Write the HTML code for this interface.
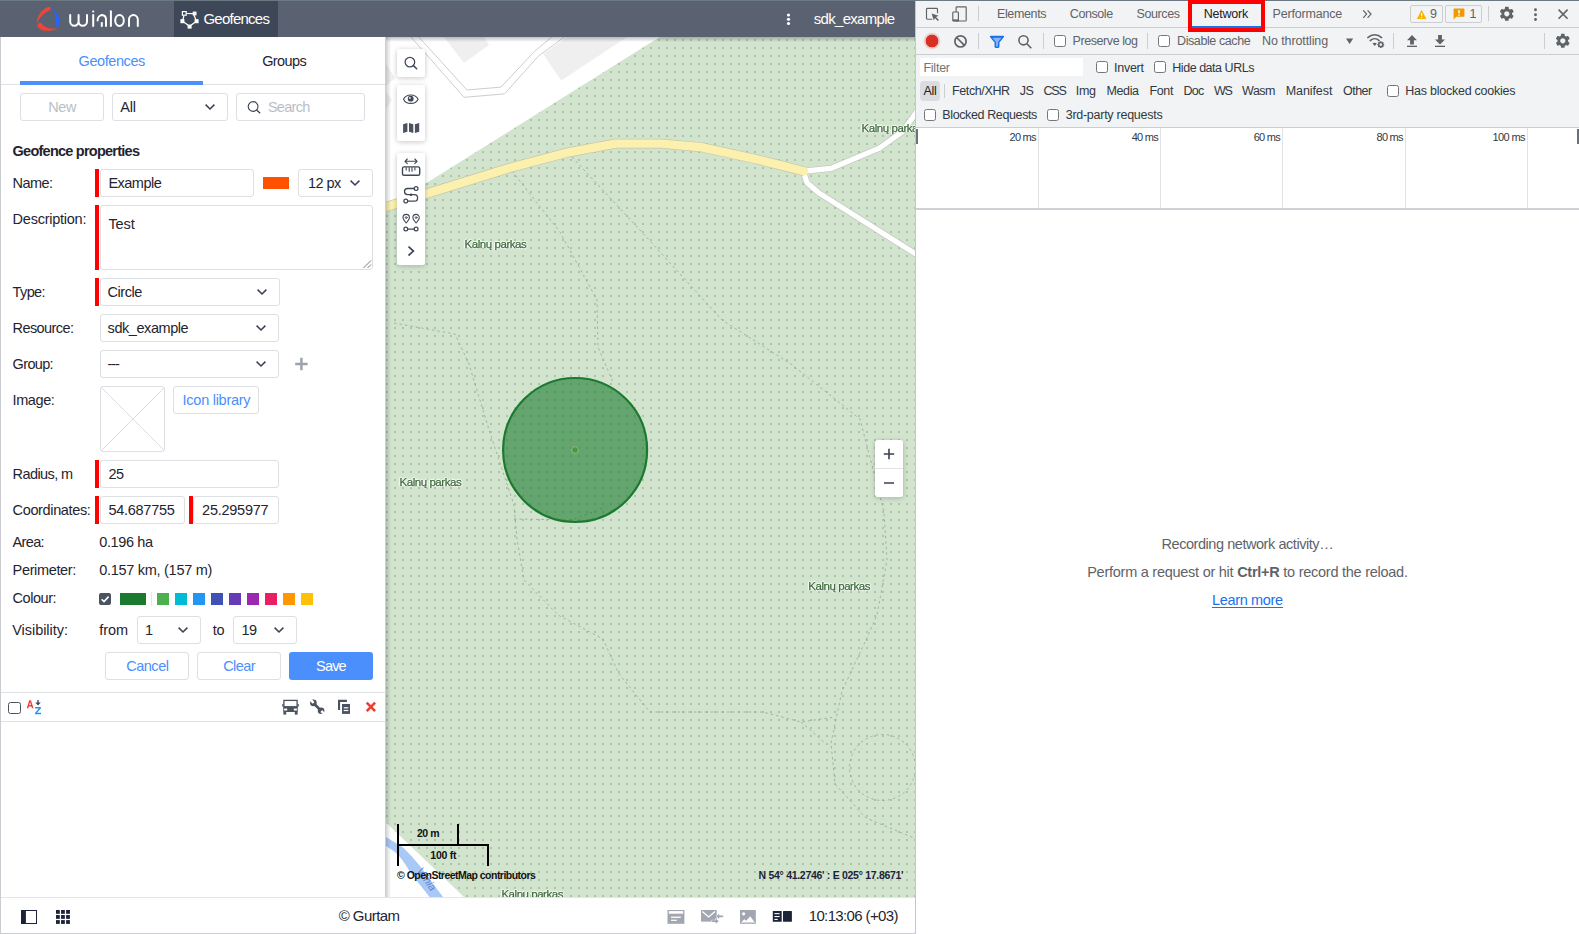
<!DOCTYPE html>
<html>
<head>
<meta charset="utf-8">
<title>Wialon</title>
<style>
*{box-sizing:border-box;margin:0;padding:0}
html,body{width:1579px;height:934px;overflow:hidden;background:#fff}
body{font-family:"Liberation Sans",sans-serif;font-size:14px;color:#1f2430;position:relative}
.abs{position:absolute}
.t{position:absolute;white-space:pre;line-height:1}
.box{position:absolute;border:1px solid #dcdfe3;border-radius:3px;background:#fff}
.red{position:absolute;width:4px;background:#ff0000}
.ln{position:absolute;background:#dfe1e4}
.sw{position:absolute;top:593px;width:12px;height:12px}
.cb{position:absolute;width:12px;height:12px;border:1px solid #767676;border-radius:2.5px;background:#fff}
.dvl{position:absolute;background:#cbcdd1}
</style>
</head>
<body>
<!-- ===== Wialon header ===== -->
<div class="abs" style="left:0;top:0;width:915px;height:37px;background:#5a6170"></div>
<div class="abs" style="left:0;top:0;width:1579px;height:1px;background:#6a7982"></div>
<div class="abs" style="left:174px;top:1px;width:104px;height:36px;background:#3e4757"></div>
<svg class="abs" style="left:30px;top:0" width="120" height="38" viewBox="0 0 120 38">
  <path d="M6.7 23.4 C6.9 16 11.8 9.3 18 7 A1.75 1.75 0 0 1 19.7 10.3 C14.2 12.6 9.8 17.4 6.7 23.4Z" fill="#f44336"/>
  <path d="M20.2 7.1 C25.8 10.2 30 16.8 30.2 23.6 A2.3 2.3 0 0 1 25.6 24.2 C27.2 18 24.8 11.6 20.2 7.1Z" fill="#2962ff"/>
  <path d="M7.9 27.2 C11.6 31.6 21 32.2 28.3 28 C22 29.8 15.8 28.4 11.6 23.8 A2.4 2.4 0 0 0 7.9 27.2Z" fill="#f44336"/>
  <g fill="none" stroke="#fff" stroke-width="2" stroke-linecap="round" stroke-linejoin="round">
    <path d="M40.2 15 V21.6 A4.2 4.2 0 0 0 48.6 21.6 V15 M48.6 21.6 A4.2 4.2 0 0 0 57 21.6 V15"/>
    <path d="M63.2 15 V26"/>
    <path d="M67.6 20.4 A5 5.4 0 0 1 72.4 15 A4.4 4.6 0 0 1 76 19.6 V26"/>
    <path d="M71.8 22.2 V26.8" stroke-linecap="butt"/>
    <path d="M80.9 11.2 V26"/>
    <path d="M85.2 20.5 a4.3 5.4 0 1 0 8.6 0 a4.3 5.4 0 1 0 -8.6 0"/>
    <path d="M99 26 V19.6 A4.4 4.6 0 0 1 107.8 19.6 V26"/>
  </g>
  <circle cx="63.2" cy="11.5" r="1.1" fill="#fff"/>
</svg>
<svg class="abs" style="left:178px;top:8px" width="24" height="24" viewBox="0 0 24 24" fill="none" stroke="#fff" stroke-width="1.2">
  <path d="M8.2 5.5 L15.5 5.7 L18.4 13.3 L11.6 18.3 L4.6 13.3 L5.9 7.5"/>
  <rect x="4.4" y="3.6" width="3.8" height="3.6" fill="#3e4757"/>
  <rect x="15.3" y="4.2" width="2.6" height="2.6" fill="#fff"/>
  <rect x="17.2" y="11.8" width="2.8" height="2.8" fill="#fff"/>
  <rect x="10.2" y="17.2" width="2.8" height="2.8" fill="#fff"/>
  <rect x="3.0" y="11.8" width="2.8" height="2.8" fill="#fff"/>
</svg>
<div class="t" style="left:203.40px;top:10px;line-height:17px;font-size:15px;color:#fff;letter-spacing:-0.750px">Geofences</div>
<svg class="abs" style="left:785px;top:11px" width="8" height="16" viewBox="0 0 8 16" fill="#fff"><circle cx="3.5" cy="4" r="1.6"/><circle cx="3.5" cy="8.25" r="1.6"/><circle cx="3.5" cy="12.5" r="1.6"/></svg>
<div class="t" style="left:813.80px;top:10px;line-height:17px;font-size:15px;color:#fff;letter-spacing:-0.708px">sdk_example</div>
<!-- ===== Left panel ===== -->
<div class="abs" style="left:0;top:37px;width:1px;height:897px;background:#c9cdd2"></div>
<!-- tabs -->
<div class="t" style="left:78.60px;top:53px;line-height:16px;font-size:14.5px;color:#4a8ffc;letter-spacing:-0.427px">Geofences</div>
<div class="t" style="left:262.20px;top:53px;line-height:16px;font-size:14.5px;color:#1f2430;letter-spacing:-0.610px">Groups</div>
<div class="ln" style="left:1px;top:84px;width:384px;height:1px"></div>
<div class="abs" style="left:20px;top:81px;width:183px;height:4px;background:#4a8ffc"></div>
<!-- toolbar -->
<div class="box" style="left:20px;top:93px;width:84px;height:28px"></div>
<div class="t" style="left:48.20px;top:99px;line-height:16px;font-size:14.5px;color:#b9bec6;letter-spacing:-0.405px">New</div>
<div class="box" style="left:112px;top:93px;width:116px;height:28px"></div>
<div class="t" style="left:120.20px;top:99px;line-height:16px;font-size:14.5px;color:#1f2430;letter-spacing:-0.108px">All</div>
<svg class="abs" style="left:204px;top:103px" width="12" height="8" viewBox="0 0 12 8" fill="none" stroke="#3a4252" stroke-width="1.5"><path d="M1.6 1.6 L6 6 L10.4 1.6"/></svg>
<div class="box" style="left:236px;top:93px;width:129px;height:28px"></div>
<svg class="abs" style="left:246px;top:99px" width="16" height="16" viewBox="0 0 16 16" fill="none" stroke="#3a4252" stroke-width="1.1"><circle cx="7.1" cy="7.5" r="4.9"/><path d="M10.6 11 L14.2 14.3" stroke-width="1.3"/></svg>
<div class="t" style="left:267.90px;top:99px;line-height:16px;font-size:14.5px;color:#b9bec6;letter-spacing:-0.692px">Search</div>
<!-- properties -->
<div class="t" style="left:12.60px;top:143px;line-height:16px;font-size:14.5px;color:#1f2430;font-weight:700;letter-spacing:-0.759px">Geofence properties</div>
<div class="t" style="left:12.60px;top:175px;line-height:16px;font-size:14.5px;color:#1f2430;letter-spacing:-0.564px">Name:</div>
<div class="red" style="left:95px;top:169px;height:28px"></div>
<div class="box" style="left:100px;top:169px;width:154px;height:28px"></div>
<div class="t" style="left:108.40px;top:175px;line-height:16px;font-size:14.5px;color:#1f2430;letter-spacing:-0.517px">Example</div>
<div class="abs" style="left:263px;top:177px;width:26px;height:12px;background:#ff5100"></div>
<div class="box" style="left:298px;top:169px;width:75px;height:28px"></div>
<div class="t" style="left:307.90px;top:175px;line-height:16px;font-size:14.5px;color:#1f2430;letter-spacing:-0.557px">12 px</div>
<svg class="abs" style="left:349px;top:179px" width="12" height="8" viewBox="0 0 12 8" fill="none" stroke="#3a4252" stroke-width="1.5"><path d="M1.6 1.6 L6 6 L10.4 1.6"/></svg>
<div class="t" style="left:12.60px;top:211px;line-height:16px;font-size:14.5px;color:#1f2430;letter-spacing:-0.247px">Description:</div>
<div class="red" style="left:95px;top:205px;height:65px"></div>
<div class="box" style="left:100px;top:205px;width:273px;height:65px"></div>
<div class="t" style="left:108.40px;top:216px;line-height:16px;font-size:14.5px;color:#1f2430;letter-spacing:-0.073px">Test</div>
<svg class="abs" style="left:362px;top:259px" width="10" height="10" viewBox="0 0 10 10" stroke="#555" stroke-width="0.8" fill="none"><path d="M1.5 9 L9 1.5 M5.5 9 L9 5.5"/></svg>
<div class="t" style="left:12.60px;top:284px;line-height:16px;font-size:14.5px;color:#1f2430;letter-spacing:-0.614px">Type:</div>
<div class="red" style="left:95px;top:278px;height:28px"></div>
<div class="box" style="left:100px;top:278px;width:180px;height:28px"></div>
<div class="t" style="left:107.60px;top:284px;line-height:16px;font-size:14.5px;color:#1f2430;letter-spacing:-0.460px">Circle</div>
<svg class="abs" style="left:256px;top:288px" width="12" height="8" viewBox="0 0 12 8" fill="none" stroke="#3a4252" stroke-width="1.5"><path d="M1.6 1.6 L6 6 L10.4 1.6"/></svg>
<div class="t" style="left:12.60px;top:320px;line-height:16px;font-size:14.5px;color:#1f2430;letter-spacing:-0.588px">Resource:</div>
<div class="box" style="left:100px;top:314px;width:179px;height:28px"></div>
<div class="t" style="left:107.60px;top:320px;line-height:16px;font-size:14.5px;color:#1f2430;letter-spacing:-0.440px">sdk_example</div>
<svg class="abs" style="left:255px;top:324px" width="12" height="8" viewBox="0 0 12 8" fill="none" stroke="#3a4252" stroke-width="1.5"><path d="M1.6 1.6 L6 6 L10.4 1.6"/></svg>
<div class="t" style="left:12.60px;top:356px;line-height:16px;font-size:14.5px;color:#1f2430;letter-spacing:-0.657px">Group:</div>
<div class="box" style="left:100px;top:350px;width:179px;height:28px"></div>
<div class="t" style="left:107.60px;top:356px;line-height:16px;font-size:14.5px;color:#1f2430;letter-spacing:-1.167px">---</div>
<svg class="abs" style="left:255px;top:360px" width="12" height="8" viewBox="0 0 12 8" fill="none" stroke="#3a4252" stroke-width="1.5"><path d="M1.6 1.6 L6 6 L10.4 1.6"/></svg>
<svg class="abs" style="left:294px;top:357px" width="14" height="14" viewBox="0 0 14 14" stroke="#9ca2ab" stroke-width="2.4" fill="none"><path d="M7.4 0.8 V13.2 M1.2 7 H13.6"/></svg>
<div class="t" style="left:12.60px;top:392px;line-height:16px;font-size:14.5px;color:#1f2430;letter-spacing:-0.424px">Image:</div>
<div class="box" style="left:100px;top:386px;width:65px;height:66px"></div>
<svg class="abs" style="left:101px;top:387px" width="63" height="64" viewBox="0 0 63 64" preserveAspectRatio="none" stroke="#d4d6d9" stroke-width="0.8"><path d="M0 0 L64 64 M64 0 L0 64"/></svg>
<div class="box" style="left:173px;top:386px;width:86px;height:28px"></div>
<div class="t" style="left:182.60px;top:392px;line-height:16px;font-size:14.5px;color:#4a8ffc;letter-spacing:-0.268px">Icon library</div>
<div class="t" style="left:12.60px;top:466px;line-height:16px;font-size:14.5px;color:#1f2430;letter-spacing:-0.587px">Radius, m</div>
<div class="red" style="left:95px;top:460px;height:28px"></div>
<div class="box" style="left:100px;top:460px;width:179px;height:28px"></div>
<div class="t" style="left:108.40px;top:466px;line-height:16px;font-size:14.5px;color:#1f2430;letter-spacing:-0.570px">25</div>
<div class="t" style="left:12.60px;top:502px;line-height:16px;font-size:14.5px;color:#1f2430;letter-spacing:-0.360px">Coordinates:</div>
<div class="red" style="left:95px;top:496px;height:28px"></div>
<div class="box" style="left:100px;top:496px;width:85px;height:28px"></div>
<div class="t" style="left:108.40px;top:502px;line-height:16px;font-size:14.5px;color:#1f2430;letter-spacing:-0.261px">54.687755</div>
<div class="red" style="left:189px;top:496px;height:28px"></div>
<div class="box" style="left:193px;top:496px;width:86px;height:28px"></div>
<div class="t" style="left:202.10px;top:502px;line-height:16px;font-size:14.5px;color:#1f2430;letter-spacing:-0.261px">25.295977</div>
<div class="t" style="left:12.60px;top:534px;line-height:16px;font-size:14.5px;color:#1f2430;letter-spacing:-0.674px">Area:</div>
<div class="t" style="left:99.30px;top:534px;line-height:16px;font-size:14.5px;color:#1f2430;letter-spacing:-0.394px">0.196 ha</div>
<div class="t" style="left:12.60px;top:562px;line-height:16px;font-size:14.5px;color:#1f2430;letter-spacing:-0.349px">Perimeter:</div>
<div class="t" style="left:99.30px;top:562px;line-height:16px;font-size:14.5px;color:#1f2430;letter-spacing:-0.292px">0.157 km, (157 m)</div>
<div class="t" style="left:12.60px;top:590px;line-height:16px;font-size:14.5px;color:#1f2430;letter-spacing:-0.450px">Colour:</div>
<div class="abs" style="left:99px;top:593px;width:12px;height:12px;background:#4b5361;border-radius:2px"></div>
<svg class="abs" style="left:99px;top:593px" width="12" height="12" viewBox="0 0 12 12" fill="none" stroke="#fff" stroke-width="1.6"><path d="M2.6 6.2 L5 8.6 L9.6 3.6"/></svg>
<div class="abs" style="left:120px;top:593px;width:26px;height:12px;background:#1b7a2f"></div>
<div class="abs" style="left:151px;top:592px;width:1px;height:14px;background:#e3e5e8"></div>
<div class="sw" style="left:157px;background:#4caf50"></div>
<div class="sw" style="left:175px;background:#00bcd4"></div>
<div class="sw" style="left:193px;background:#2196f3"></div>
<div class="sw" style="left:211px;background:#3f51b5"></div>
<div class="sw" style="left:229px;background:#673ab7"></div>
<div class="sw" style="left:247px;background:#9c27b0"></div>
<div class="sw" style="left:265px;background:#e91e63"></div>
<div class="sw" style="left:283px;background:#ff9800"></div>
<div class="sw" style="left:301px;background:#ffc107"></div>
<div class="t" style="left:12.20px;top:622px;line-height:16px;font-size:14.5px;color:#1f2430;letter-spacing:-0.040px">Visibility:</div>
<div class="t" style="left:99.30px;top:622px;line-height:16px;font-size:14.5px;color:#1f2430;letter-spacing:-0.100px">from</div>
<div class="box" style="left:137px;top:616px;width:64px;height:28px"></div>
<div class="t" style="left:144.90px;top:622px;line-height:16px;font-size:14.5px;color:#1f2430;letter-spacing:-1.478px">1</div>
<svg class="abs" style="left:177px;top:626px" width="12" height="8" viewBox="0 0 12 8" fill="none" stroke="#3a4252" stroke-width="1.5"><path d="M1.6 1.6 L6 6 L10.4 1.6"/></svg>
<div class="t" style="left:212.80px;top:622px;line-height:16px;font-size:14.5px;color:#1f2430;letter-spacing:-0.247px">to</div>
<div class="box" style="left:233px;top:616px;width:64px;height:28px"></div>
<div class="t" style="left:241.40px;top:622px;line-height:16px;font-size:14.5px;color:#1f2430;letter-spacing:-0.570px">19</div>
<svg class="abs" style="left:273px;top:626px" width="12" height="8" viewBox="0 0 12 8" fill="none" stroke="#3a4252" stroke-width="1.5"><path d="M1.6 1.6 L6 6 L10.4 1.6"/></svg>
<div class="box" style="left:105px;top:652px;width:84px;height:28px"></div>
<div class="t" style="left:126.20px;top:658px;line-height:16px;font-size:14.5px;color:#4a8ffc;letter-spacing:-0.473px">Cancel</div>
<div class="box" style="left:197px;top:652px;width:84px;height:28px"></div>
<div class="t" style="left:223.20px;top:658px;line-height:16px;font-size:14.5px;color:#4a8ffc;letter-spacing:-0.551px">Clear</div>
<div class="abs" style="left:289px;top:652px;width:84px;height:28px;background:#4a8ffc;border-radius:3px"></div>
<div class="t" style="left:316.10px;top:658px;line-height:16px;font-size:14.5px;color:#fff;letter-spacing:-0.841px">Save</div>
<!-- list toolbar -->
<div class="ln" style="left:1px;top:692px;width:384px;height:1px"></div>
<div class="ln" style="left:1px;top:721px;width:384px;height:1px"></div>
<div class="cb" style="left:8px;top:701.5px;width:12.5px;height:12.5px;border-color:#4b5361;border-width:1.2px"></div>
<svg class="abs" style="left:26px;top:699px" width="17" height="17" viewBox="0 0 17 17">
  <path d="M0.7 9.2 L3.3 1.2 H4.9 L7.5 9.2 H5.9 L5.4 7.4 H2.8 L2.3 9.2Z M3.2 6.1 H5 L4.1 3.1Z" fill="#f4392f"/>
  <path d="M11.3 1 H12.7 V3.6 H14.8 L12 6.6 L9.2 3.6 H11.3Z" fill="#3e4a66"/>
  <path d="M9.1 8.1 H14.9 V9.2 L11 13.8 H15 V15.2 H9 V14 L12.8 9.5 H9.1Z" fill="#2196f3"/>
</svg>
<svg class="abs" style="left:282px;top:699px" width="17" height="17" viewBox="0 0 17 17">
  <rect x="1.9" y="1.4" width="13.2" height="6.4" fill="#fff" stroke="#4b5361" stroke-width="1.3"/>
  <rect x="1.25" y="7.4" width="14.5" height="5.6" fill="#4b5361"/>
  <rect x="0.2" y="5.1" width="1.3" height="2.4" fill="#4b5361"/><rect x="15.5" y="5.1" width="1.3" height="2.4" fill="#4b5361"/>
  <rect x="2.1" y="9.6" width="3.1" height="1.9" fill="#fff"/><rect x="11.8" y="9.6" width="3.1" height="1.9" fill="#fff"/>
  <rect x="1.4" y="13" width="2.8" height="2.6" fill="#4b5361"/><rect x="12.8" y="13" width="2.8" height="2.6" fill="#4b5361"/>
</svg>
<svg class="abs" style="left:309px;top:699px" width="17" height="17" viewBox="0 0 17 17">
  <path d="M4.6 4.2 L12.2 11.9" stroke="#4b5361" stroke-width="2.7" fill="none"/>
  <circle cx="4.4" cy="3.9" r="3.3" fill="#4b5361"/>
  <path d="M4.4 3.9 L-1 -1.5" stroke="#fff" stroke-width="2.5" transform="translate(0.2,-0.1)"/>
  <circle cx="12.1" cy="11.8" r="3.3" fill="#4b5361"/>
  <path d="M12.3 12 L18 17.7" stroke="#fff" stroke-width="2.5"/>
</svg>
<svg class="abs" style="left:337px;top:699px" width="15" height="17" viewBox="0 0 15 17">
  <path d="M1 0.8 H9.9 V3.1 H3.1 V10.9 H1Z" fill="#4b5361"/>
  <rect x="5" y="5" width="8" height="9.9" fill="#4b5361"/>
  <rect x="6.7" y="8.2" width="4.6" height="1.2" fill="#fff"/><rect x="6.7" y="10.9" width="4.6" height="1.2" fill="#fff"/>
</svg>
<svg class="abs" style="left:365px;top:701px" width="12" height="12" viewBox="0 0 12 12" stroke="#f4392f" stroke-width="2.5" fill="none"><path d="M1.7 1.7 L10.1 10.1 M10.1 1.7 L1.7 10.1"/></svg>
<!-- panel right shadow -->
<div class="abs" style="left:385px;top:37px;width:6px;height:860px;background:linear-gradient(90deg,rgba(60,64,72,.28),rgba(60,64,72,0));z-index:5"></div>
<!-- ===== Map ===== -->
<div class="abs" style="left:386px;top:37px;width:529px;height:860px;overflow:hidden;background:#d2e4ce">
<svg class="abs" style="left:0;top:0" width="529" height="860" viewBox="386 37 529 860">
  <defs>
    <pattern id="dots" x="642" y="303" width="8" height="8" patternUnits="userSpaceOnUse"><rect x="0" y="0" width="2" height="2" fill="#a7c6a6" shape-rendering="crispEdges"/></pattern>
    <linearGradient id="tsh" x1="0" y1="0" x2="0" y2="1"><stop offset="0" stop-color="#30343c" stop-opacity=".3"/><stop offset="1" stop-color="#30343c" stop-opacity="0"/></linearGradient>
    <filter id="cs" x="-30%" y="-30%" width="160%" height="160%"><feDropShadow dx="0" dy="1" stdDeviation="2.6" flood-color="#20242c" flood-opacity=".24"/></filter>
  </defs>
  <rect x="386" y="37" width="530" height="860" fill="#d2e4ce"/>
  <rect x="386" y="37" width="530" height="860" fill="url(#dots)"/>
  <!-- white area top-left -->
  <path d="M386 37 H659.7 L386 208.2Z" fill="#fff"/>
  <path d="M444 37 H484 L489 45 L464 63Z" fill="#efefef"/>
  <path d="M543 54 L567 37 H627 L561.4 80.4Z" fill="#efefef"/>
  <path d="M386 64 L395 78 L386 86Z M386 92 L392 100 L386 109Z" fill="#efefef"/>
  <path d="M418.8 37 L467 90 L501 87.1 L534.4 51.5 L551.7 37 M411 37 L464 97.3 L504.5 93.9 L538.2 56.3 L564.3 37" fill="none" stroke="#cdcdcd" stroke-width="1"/>
  <!-- white bottom-left & river -->
  <path d="M386 822.5 L464 897 H386Z" fill="#fff"/>
  <path d="M386 837 L403 847.5 Q412 856 420 866 L443 897 H429.5 L410 872 Q402 858 395 852 L386 846Z" fill="#a8c9f6"/>
  <text x="0" y="0" transform="translate(416.5,870.5) rotate(56)" font-family="Liberation Sans" font-style="italic" font-size="10.5" fill="#5b7fd0">Vilnia</text>
  <!-- faint dashed footpaths -->
  <g fill="none" stroke="#93a890" stroke-width="0.8" stroke-dasharray="2.5 3">
    <path d="M572 157 L640 230 L722 320 L791 364 L860 419 L884 512 L887 560 L877 615 L866 640 L842 691 L831 743 L835 784 L866 818 L914 838"/>
    <path d="M512 171 L560 232 L597 300 L598 347 L613 382"/>
    <path d="M394 323 L455 334 L469 364 L490 433 L514 505 L517 539 L524 580 L558 615 L603 639 L619 674 L650 712 L763 712 L801 722 L835 717"/>
    <path d="M514 519 L572 520 L606 507"/>
    <path d="M801 722 L825 743"/>
    <circle cx="882.5" cy="767.5" r="33"/>
  </g>
  <!-- white minor roads -->
  <g fill="none" stroke-linejoin="round" stroke-linecap="butt">
    <path d="M804.2 171.2 L831.2 168.3 L879.4 148.1 L902.5 131.7 L918 110" stroke="#c6cbc3" stroke-width="6.8"/>
    <path d="M804.2 175 L807 182.8 L819.6 193.4 L918 255.4" stroke="#c6cbc3" stroke-width="6.8"/>
    <path d="M804.2 171.2 L831.2 168.3 L879.4 148.1 L902.5 131.7 L918 110" stroke="#fff" stroke-width="5.2"/>
    <path d="M804.2 174 L807 182.8 L819.6 193.4 L918 255.4" stroke="#fff" stroke-width="5.2"/>
  </g>
  <!-- yellow road -->
  <path d="M380 209 L425.5 194 L509.3 168 L567.2 152.6 L615.3 143.6 L661 143.6 L702 147.3 L756.9 159.3 L804.2 171.2" fill="none" stroke="#c9c8a8" stroke-width="9.8" stroke-linejoin="round"/>
  <path d="M380 209 L425.5 194 L509.3 168 L567.2 152.6 L615.3 143.6 L661 143.6 L702 147.3 L756.9 159.3 L804.2 171.2" fill="none" stroke="#fbf0ae" stroke-width="8.4" stroke-linejoin="round" stroke-linecap="round"/>
  <!-- geofence circle -->
  <circle cx="575.1" cy="450" r="72" fill="#1b7a2f" fill-opacity=".6" stroke="#1b7a2f" stroke-width="2.2"/>
  <circle cx="575" cy="450" r="3.4" fill="#3f9a52" stroke="#b6b66a" stroke-width="0.9"/>
  <!-- top shadow -->
  <rect x="386" y="37" width="530" height="5" fill="url(#tsh)"/>
  <!-- tool cards -->
  <g filter="url(#cs)" fill="#fff">
    <rect x="397" y="49" width="28" height="28" rx="3"/>
    <rect x="397" y="85" width="28" height="56" rx="3"/>
    <rect x="397" y="153" width="28" height="112" rx="3"/>
    <rect x="875" y="440" width="28" height="57" rx="3"/>
  </g>
  <rect x="875" y="468" width="28" height="1" fill="#e1e3e6"/>
  <path d="M883.8 454 H894.2 M889 448.8 V459.2 M884 483 H894" stroke="#3a4252" stroke-width="1.6" fill="none"/>
  <g fill="none" stroke="#3f4757" stroke-width="1.25" stroke-linecap="round" stroke-linejoin="round">
    <!-- search -->
    <circle cx="409.9" cy="62.1" r="4.8"/><path d="M413.4 65.6 L416.7 68.7" stroke-width="1.5"/>
    <!-- eye -->
    <path d="M403.5 99.2 C406.2 93.6 415.4 93.6 418.1 99.2 C415.4 104.8 406.2 104.8 403.5 99.2Z" stroke-width="1.1"/>
    <!-- ruler -->
    <path d="M405 161.3 H417.1 M407.3 159 L405 161.3 L407.3 163.6 M414.8 159 L417.1 161.3 L414.8 163.6" stroke-width="1.1"/>
    <rect x="402.5" y="166.9" width="17.2" height="8.4" rx="1.6" stroke-width="1.4"/>
    <path d="M406.2 167.3 V170.4 M409.2 167.3 V171.8 M412 167.3 V171.8 M414.9 167.3 V170.4" stroke-width="1.1" stroke-linecap="butt"/>
    <!-- route -->
    <circle cx="416.1" cy="188.5" r="1.9"/><circle cx="405.8" cy="201.1" r="1.9"/>
    <path d="M414.2 188.5 H407.6 A3.1 3.1 0 0 0 407.6 194.7 H414.4 A3.2 3.2 0 0 1 414.4 201.1 H407.7" stroke-width="1.3"/>
    <!-- pins -->
    <path d="M406.2 223 C404 220.6 403 219.2 403 217.6 A3.2 3.2 0 0 1 409.4 217.6 C409.4 219.2 408.4 220.6 406.2 223Z" stroke-width="1.1"/>
    <path d="M416.1 223 C413.9 220.6 412.9 219.2 412.9 217.6 A3.2 3.2 0 0 1 419.3 217.6 C419.3 219.2 418.3 220.6 416.1 223Z" stroke-width="1.1"/>
    <circle cx="406.2" cy="217.6" r="0.9" stroke-width="0.9"/><circle cx="416.1" cy="217.6" r="0.9" stroke-width="0.9"/>
    <circle cx="405.8" cy="229" r="1.9"/><circle cx="416.1" cy="229" r="1.9"/><path d="M407.7 229 H414.2"/>
    <!-- chevron -->
    <path d="M408.5 246.7 L413.4 251.1 L408.5 255.5" stroke-width="1.7" stroke-linecap="butt" stroke-linejoin="miter"/>
  </g>
  <circle cx="410.7" cy="98.7" r="2.9" fill="#3f4757"/><circle cx="409.9" cy="97.9" r="0.9" fill="#fff"/>
  <circle cx="411" cy="194.7" r="1.3" fill="#3f4757"/>
  <path d="M403.1 124.2 L407.4 122.9 V131.7 L403.1 133Z M409 122.9 L413.3 124.2 V133 L409 131.7Z M414.9 124.2 L419.2 122.9 V131.7 L414.9 133Z" fill="#4b5361"/>
  <!-- scale -->
  <path d="M398 824 V866 M397 845 H489 M458 824 V845 M488 845 V866" stroke="#000" stroke-width="2" fill="none" shape-rendering="crispEdges"/>
</svg>
<style>.ml{position:absolute;white-space:pre;line-height:1;opacity:.99;-webkit-text-stroke:.25px currentColor;text-shadow:-1px 0 0 rgba(255,255,255,.75),1px 0 0 rgba(255,255,255,.75),0 1px 0 rgba(255,255,255,.75),0 -1px 0 rgba(255,255,255,.75),0 0 2px #fff,0 0 2px #fff}</style>
<div class="ml" style="left:78.60px;top:201px;line-height:12px;font-size:11.5px;color:#3c6a3a;letter-spacing:-0.452px">Kalnų parkas</div>
<div class="ml" style="left:13.50px;top:439px;line-height:12px;font-size:11.5px;color:#3c6a3a;letter-spacing:-0.452px">Kalnų parkas</div>
<div class="ml" style="left:422.30px;top:543px;line-height:12px;font-size:11.5px;color:#3c6a3a;letter-spacing:-0.452px">Kalnų parkas</div>
<div class="ml" style="left:475.60px;top:85px;line-height:12px;font-size:11.5px;color:#3c6a3a;letter-spacing:-0.452px">Kalnų parkas</div>
<div class="ml" style="left:115.40px;top:851px;line-height:12px;font-size:11.5px;color:#3c6a3a;letter-spacing:-0.460px">Kalnų parkas</div>
<div class="t" style="left:30.90px;top:790px;line-height:12px;font-size:10.5px;color:#111;font-weight:700;letter-spacing:-0.409px">20 m</div>
<div class="t" style="left:44.30px;top:812px;line-height:12px;font-size:10.5px;color:#111;font-weight:700;letter-spacing:-0.240px">100 ft</div>
<div class="t" style="left:11.10px;top:832px;line-height:12px;font-size:10.5px;color:#111;font-weight:700;letter-spacing:-0.529px">© OpenStreetMap contributors</div>
<div class="t" style="left:372.60px;top:832px;line-height:12px;font-size:10.5px;color:#1a2338;font-weight:700;letter-spacing:-0.294px">N 54° 41.2746' : E 025° 17.8671'</div>


</div>
<!-- ===== Footer ===== -->
<div class="abs" style="left:1px;top:897px;width:914px;height:37px;background:#fff"></div>
<div class="ln" style="left:1px;top:897px;width:914px;height:1px;background:#e3e5e8"></div>
<div class="abs" style="left:0;top:933px;width:916px;height:1px;background:#c9cdd2"></div>
<svg class="abs" style="left:21px;top:910px" width="16" height="14" viewBox="0 0 16 14"><rect x="0.5" y="0.5" width="15" height="13" fill="#fff" stroke="#1a2338" stroke-width="1"/><rect x="0" y="0" width="4.9" height="14" fill="#1a2338"/></svg>
<svg class="abs" style="left:56px;top:910px" width="14" height="14" viewBox="0 0 14 14" fill="#1a2338">
  <rect x="0" y="0" width="3.8" height="3.8"/><rect x="5.05" y="0" width="3.8" height="3.8"/><rect x="10.1" y="0" width="3.8" height="3.8"/>
  <rect x="0" y="5.05" width="3.8" height="3.8"/><rect x="5.05" y="5.05" width="3.8" height="3.8"/><rect x="10.1" y="5.05" width="3.8" height="3.8"/>
  <rect x="0" y="10.1" width="3.8" height="3.8"/><rect x="5.05" y="10.1" width="3.8" height="3.8"/><rect x="10.1" y="10.1" width="3.8" height="3.8"/>
</svg>
<div class="t" style="left:338.80px;top:907px;line-height:17px;font-size:15px;color:#1f2430;letter-spacing:-0.579px">© Gurtam</div>
<svg class="abs" style="left:667px;top:910px" width="18" height="14" viewBox="0 0 18 14"><rect x="0.5" y="0" width="16.9" height="13.8" fill="#a1a6b1"/><rect x="1.8" y="1.1" width="14.3" height="2.6" fill="#fff"/><rect x="4" y="6.6" width="9.8" height="1.3" fill="#fff"/><rect x="4" y="9.7" width="5.8" height="1.2" fill="#fff"/></svg>
<svg class="abs" style="left:700px;top:909px" width="24" height="16" viewBox="0 0 24 16">
  <rect x="1" y="1" width="15.7" height="11.6" fill="#a1a6b1"/>
  <path d="M2.3 2.6 L8.7 8 L15 2.6" fill="none" stroke="#fff" stroke-width="1.3"/>
  <path d="M23.2 6.4 H19.2 V4.7 L16.3 7.3 L19.2 9.9 V8.2 H23.2Z" fill="#a1a6b1" stroke="#fff" stroke-width="0.9" paint-order="stroke"/>
  <path d="M11.5 11.3 H15.6 V9.6 L18.8 12.2 L15.6 14.8 V13.1 H11.5Z" fill="#a1a6b1" stroke="#fff" stroke-width="0.9" paint-order="stroke"/>
</svg>
<svg class="abs" style="left:739px;top:910px" width="18" height="14" viewBox="0 0 18 14"><rect x="1" y="0" width="15.8" height="13.8" fill="#a1a6b1"/><circle cx="4.6" cy="3.8" r="1.6" fill="#fff"/><path d="M2 12.6 L5.3 9.3 L7.2 10.8 L11.2 6.2 L15.8 12.6Z" fill="#fff"/></svg>
<svg class="abs" style="left:772px;top:910px" width="21" height="13" viewBox="0 0 21 13"><rect x="0.8" y="1" width="8.9" height="10.8" rx="0.6" fill="#1a2338"/><rect x="11" y="1" width="8.9" height="10.8" rx="0.6" fill="#1a2338"/><rect x="2.4" y="3.1" width="5.2" height="1.1" fill="#fff"/><rect x="2.4" y="6" width="5.2" height="1.1" fill="#fff"/><rect x="2.4" y="8.9" width="3.3" height="1.1" fill="#fff"/></svg>
<div class="t" style="left:808.70px;top:907px;line-height:17px;font-size:15px;color:#1f2430;letter-spacing:-0.629px">10:13:06 (+03)</div>
<!-- ===== DevTools ===== -->
<div class="abs" style="left:915px;top:1px;width:664px;height:933px;background:#fff"></div>
<div class="abs" style="left:915px;top:1px;width:1px;height:933px;background:#c4c7cb"></div>
<div class="abs" style="left:916px;top:1px;width:663px;height:127px;background:#f1f3f4"></div>
<div class="dvl" style="left:916px;top:27px;width:663px;height:1px"></div>
<div class="dvl" style="left:916px;top:54px;width:663px;height:1px"></div>
<div class="dvl" style="left:916px;top:127px;width:663px;height:1px"></div>
<!-- tab bar icons -->
<svg class="abs" style="left:924px;top:5px" width="46" height="18" viewBox="0 0 46 18" fill="none" stroke="#5f6368" stroke-width="1.15">
  <path d="M8.2 14.2 H3.4 Q2.5 14.2 2.5 13.3 V4.3 Q2.5 3.4 3.4 3.4 H12.6 Q13.5 3.4 13.5 4.3 V8.2"/>
  <path d="M7.6 8.4 L14.6 10.8 L12 12 L15 15 L13.9 16 L10.9 13 L9.8 15.5Z" fill="#5f6368" stroke="none"/>
  <rect x="32.1" y="1.8" width="10.1" height="14.2" rx="0.8"/>
  <rect x="28.8" y="7" width="5.6" height="9" rx="0.8" fill="#f1f3f4"/>
  <path d="M28.8 15.3 H34.4" stroke-width="1.8"/>
</svg>
<div class="dvl" style="left:978px;top:6px;width:1px;height:15px"></div>
<div class="t" style="left:996.90px;top:7px;line-height:14px;font-size:12.5px;color:#5f6368;letter-spacing:-0.351px">Elements</div>
<div class="t" style="left:1069.80px;top:7px;line-height:14px;font-size:12.5px;color:#5f6368;letter-spacing:-0.411px">Console</div>
<div class="t" style="left:1136.50px;top:7px;line-height:14px;font-size:12.5px;color:#5f6368;letter-spacing:-0.394px">Sources</div>
<div class="t" style="left:1203.70px;top:7px;line-height:14px;font-size:12.5px;color:#202124;letter-spacing:-0.206px">Network</div>
<div class="abs" style="left:1192px;top:26px;width:69px;height:2px;background:#1a73e8"></div>
<div class="abs" style="left:1188px;top:0;width:77px;height:32px;border:4px solid #ff0000;z-index:3"></div>
<div class="t" style="left:1272.60px;top:7px;line-height:14px;font-size:12.5px;color:#5f6368;letter-spacing:-0.197px">Performance</div>
<svg class="abs" style="left:1362px;top:9px" width="11" height="10" viewBox="0 0 11 10" fill="none" stroke="#5f6368" stroke-width="1.2"><path d="M1.2 1.4 L4.6 5.1 L1.2 8.8 M5.6 1.4 L9 5.1 L5.6 8.8"/></svg>
<div class="abs" style="left:1410px;top:5px;width:33px;height:18px;border:1px solid #cbcdd1;border-radius:2px"></div>
<svg class="abs" style="left:1416px;top:9px" width="11" height="11" viewBox="0 0 11 11"><path d="M5.6 0.8 L10.4 9.9 H0.9Z" fill="#f4b400"/><path d="M5.1 4 H6.2 V7 H5.1Z M5.1 7.8 H6.2 V8.9 H5.1Z" fill="#fff"/></svg>
<div class="t" style="left:1430.00px;top:7px;line-height:14px;font-size:12.5px;color:#5f6368;letter-spacing:-0.853px">9</div>
<div class="abs" style="left:1445px;top:5px;width:37px;height:18px;border:1px solid #cbcdd1;border-radius:2px"></div>
<svg class="abs" style="left:1453px;top:8px" width="12" height="12" viewBox="0 0 12 12"><path d="M1.2 0.4 H10.8 Q11.4 0.4 11.4 1 V8.2 Q11.4 8.8 10.8 8.8 H3.2 L0.6 11.4 V1 Q0.6 0.4 1.2 0.4Z" fill="#f29900"/><path d="M5.3 1.9 H6.7 V5.6 H5.3Z M5.3 6.4 H6.7 V7.7 H5.3Z" fill="#fff"/></svg>
<div class="t" style="left:1469.40px;top:7px;line-height:14px;font-size:12.5px;color:#5f6368;letter-spacing:-2.853px">1</div>
<div class="dvl" style="left:1488px;top:6px;width:1px;height:15px"></div>
<svg class="abs" style="left:1498.3px;top:5.1px" width="17.6" height="17.6" viewBox="0 0 24 24"><path fill="#5f6368" d="M19.14,12.94c0.04-0.3,0.06-0.61,0.06-0.94c0-0.32-0.02-0.64-0.07-0.94l2.03-1.58c0.18-0.14,0.23-0.41,0.12-0.61 l-1.92-3.32c-0.12-0.22-0.37-0.29-0.59-0.22l-2.39,0.96c-0.5-0.38-1.03-0.7-1.62-0.94L14.4,2.81c-0.04-0.24-0.24-0.41-0.48-0.41 h-3.84c-0.24,0-0.43,0.17-0.47,0.41L9.25,5.35C8.66,5.59,8.12,5.92,7.63,6.29L5.24,5.33c-0.22-0.08-0.47,0-0.59,0.22L2.74,8.87 C2.62,9.08,2.66,9.34,2.86,9.48l2.03,1.58C4.84,11.36,4.8,11.69,4.8,12s0.02,0.64,0.07,0.94l-2.03,1.58 c-0.18,0.14-0.23,0.41-0.12,0.61l1.92,3.32c0.12,0.22,0.37,0.29,0.59,0.22l2.39-0.96c0.5,0.38,1.03,0.7,1.62,0.94l0.36,2.54 c0.05,0.24,0.24,0.41,0.48,0.41h3.84c0.24,0,0.44-0.17,0.47-0.41l0.36-2.54c0.59-0.24,1.13-0.56,1.62-0.94l2.39,0.96 c0.22,0.08,0.47,0,0.59-0.22l1.92-3.32c0.12-0.22,0.07-0.47-0.12-0.61L19.14,12.94z M12,15.6c-1.98,0-3.6-1.62-3.6-3.6 s1.62-3.6,3.6-3.6s3.6,1.62,3.6,3.6S13.98,15.6,12,15.6z"/></svg>
<svg class="abs" style="left:1533px;top:7px" width="6" height="16" viewBox="0 0 6 16" fill="#5f6368"><circle cx="2.5" cy="2.8" r="1.45"/><circle cx="2.5" cy="7.7" r="1.45"/><circle cx="2.5" cy="12.5" r="1.45"/></svg>
<svg class="abs" style="left:1557px;top:8px" width="12" height="12" viewBox="0 0 12 12" stroke="#5f6368" stroke-width="1.6" fill="none"><path d="M1.6 1.6 L10.6 10.8 M10.6 1.6 L1.6 10.8"/></svg>
<!-- network toolbar -->
<div class="abs" style="left:923px;top:32px;width:18px;height:18px;border-radius:9px;background:radial-gradient(circle,#d93025 0,#d93025 6px,rgba(217,48,37,.28) 6.6px,rgba(217,48,37,0) 9px)"></div>
<svg class="abs" style="left:953px;top:34px" width="15" height="15" viewBox="0 0 15 15" fill="none" stroke="#5f6368" stroke-width="1.7"><circle cx="7.5" cy="7.4" r="5.6"/><path d="M3.6 3.5 L11.4 11.3"/></svg>
<div class="dvl" style="left:978px;top:33px;width:1px;height:16px"></div>
<svg class="abs" style="left:989px;top:35px" width="16" height="14" viewBox="0 0 16 14"><path d="M1.6 1.5 H14.4 L9.7 7.4 V11.4 Q9.7 12.3 8.8 12.3 H7.2 Q6.3 12.3 6.3 11.4 V7.4Z" fill="#8ab4f8" stroke="#1a73e8" stroke-width="1.5" stroke-linejoin="round"/><path d="M1.6 1.5 H14.4 L13.4 2.8 H2.6Z" fill="#1a73e8"/></svg>
<svg class="abs" style="left:1017px;top:34px" width="16" height="16" viewBox="0 0 16 16" fill="none" stroke="#5f6368" stroke-width="1.6"><circle cx="6.5" cy="6.3" r="4.6"/><path d="M9.9 9.8 L14.3 14.2"/></svg>
<div class="dvl" style="left:1043px;top:33px;width:1px;height:16px"></div>
<div class="cb" style="left:1054px;top:35px"></div>
<div class="t" style="left:1072.60px;top:34px;line-height:14px;font-size:12.5px;color:#5f6368;letter-spacing:-0.432px">Preserve log</div>
<div class="dvl" style="left:1147px;top:33px;width:1px;height:16px"></div>
<div class="cb" style="left:1158px;top:35px"></div>
<div class="t" style="left:1177.00px;top:34px;line-height:14px;font-size:12.5px;color:#5f6368;letter-spacing:-0.401px">Disable cache</div>
<div class="t" style="left:1262.10px;top:34px;line-height:14px;font-size:12.5px;color:#5f6368;letter-spacing:-0.116px">No throttling</div>
<svg class="abs" style="left:1345px;top:38px" width="9" height="7" viewBox="0 0 9 7"><path d="M1 0.6 H8.2 L4.6 6Z" fill="#5f6368"/></svg>
<svg class="abs" style="left:1366px;top:33px" width="20" height="16" viewBox="0 0 20 16" fill="none" stroke="#5f6368" stroke-width="1.5" stroke-linecap="round">
  <path d="M1.8 4.6 C5.8 0.8 11.6 0.8 15.6 4.6"/><path d="M4.2 7.6 C6.8 5.2 10.6 5.2 13.2 7.6"/>
  <path d="M6.5 10.4 L8.7 12.9 L10.9 10.4 C9.6 9.4 7.8 9.4 6.5 10.4Z" fill="#5f6368" stroke="none"/>
  <circle cx="14.8" cy="11.6" r="2.1" stroke-width="1.6"/>
  <path d="M14.8 8.2 V9.2 M14.8 14 V15 M11.4 11.6 H12.4 M17.2 11.6 H18.2 M12.4 9.2 L13.1 9.9 M16.5 13.3 L17.2 14 M17.2 9.2 L16.5 9.9 M13.1 13.3 L12.4 14" stroke-width="1.3" stroke-linecap="butt"/>
</svg>
<div class="dvl" style="left:1393px;top:33px;width:1px;height:16px"></div>
<svg class="abs" style="left:1406px;top:34px" width="12" height="14" viewBox="0 0 12 14" fill="#5f6368"><path d="M6 1 L11 6.2 H7.9 V10.6 H4.1 V6.2 H1Z"/><rect x="1" y="11.7" width="10" height="1.3"/></svg>
<svg class="abs" style="left:1434px;top:34px" width="12" height="14" viewBox="0 0 12 14" fill="#5f6368"><path d="M6 10.6 L11 5.4 H7.9 V1 H4.1 V5.4 H1Z"/><rect x="1" y="11.7" width="10" height="1.3"/></svg>
<div class="dvl" style="left:1544px;top:33px;width:1px;height:16px"></div>
<svg class="abs" style="left:1554.2px;top:32.2px" width="17.6" height="17.6" viewBox="0 0 24 24"><path fill="#5f6368" d="M19.14,12.94c0.04-0.3,0.06-0.61,0.06-0.94c0-0.32-0.02-0.64-0.07-0.94l2.03-1.58c0.18-0.14,0.23-0.41,0.12-0.61 l-1.92-3.32c-0.12-0.22-0.37-0.29-0.59-0.22l-2.39,0.96c-0.5-0.38-1.03-0.7-1.62-0.94L14.4,2.81c-0.04-0.24-0.24-0.41-0.48-0.41 h-3.84c-0.24,0-0.43,0.17-0.47,0.41L9.25,5.35C8.66,5.59,8.12,5.92,7.63,6.29L5.24,5.33c-0.22-0.08-0.47,0-0.59,0.22L2.74,8.87 C2.62,9.08,2.66,9.34,2.86,9.48l2.03,1.58C4.84,11.36,4.8,11.69,4.8,12s0.02,0.64,0.07,0.94l-2.03,1.58 c-0.18,0.14-0.23,0.41-0.12,0.61l1.92,3.32c0.12,0.22,0.37,0.29,0.59,0.22l2.39-0.96c0.5,0.38,1.03,0.7,1.62,0.94l0.36,2.54 c0.05,0.24,0.24,0.41,0.48,0.41h3.84c0.24,0,0.44-0.17,0.47-0.41l0.36-2.54c0.59-0.24,1.13-0.56,1.62-0.94l2.39,0.96 c0.22,0.08,0.47,0,0.59-0.22l1.92-3.32c0.12-0.22,0.07-0.47-0.12-0.61L19.14,12.94z M12,15.6c-1.98,0-3.6-1.62-3.6-3.6 s1.62-3.6,3.6-3.6s3.6,1.62,3.6,3.6S13.98,15.6,12,15.6z"/></svg>
<!-- filter row -->
<div class="abs" style="left:920px;top:58px;width:163px;height:18px;background:#fff"></div>
<div class="t" style="left:923.40px;top:61px;line-height:14px;font-size:12.5px;color:#757575;letter-spacing:-0.230px">Filter</div>
<div class="cb" style="left:1096px;top:61px"></div>
<div class="t" style="left:1114.10px;top:61px;line-height:14px;font-size:12.5px;color:#303942;letter-spacing:-0.294px">Invert</div>
<div class="cb" style="left:1154px;top:61px"></div>
<div class="t" style="left:1172.30px;top:61px;line-height:14px;font-size:12.5px;color:#303942;letter-spacing:-0.468px">Hide data URLs</div>
<!-- type row -->
<div class="abs" style="left:920px;top:81px;width:20px;height:20px;border-radius:4px;background:#dadce0"></div>
<div class="t" style="left:923.40px;top:84px;line-height:14px;font-size:12.5px;color:#202124;letter-spacing:-0.269px">All</div>
<div class="dvl" style="left:944px;top:84px;width:1px;height:14px"></div>
<div class="t" style="left:952.00px;top:84px;line-height:14px;font-size:12.5px;color:#303942;letter-spacing:-0.382px">Fetch/XHR</div>
<div class="t" style="left:1019.80px;top:84px;line-height:14px;font-size:12.5px;color:#303942;letter-spacing:-0.497px">JS</div>
<div class="t" style="left:1043.50px;top:84px;line-height:14px;font-size:12.5px;color:#303942;letter-spacing:-1.234px">CSS</div>
<div class="t" style="left:1075.80px;top:84px;line-height:14px;font-size:12.5px;color:#303942;letter-spacing:-0.348px">Img</div>
<div class="t" style="left:1106.40px;top:84px;line-height:14px;font-size:12.5px;color:#303942;letter-spacing:-0.349px">Media</div>
<div class="t" style="left:1149.40px;top:84px;line-height:14px;font-size:12.5px;color:#303942;letter-spacing:-0.329px">Font</div>
<div class="t" style="left:1183.50px;top:84px;line-height:14px;font-size:12.5px;color:#303942;letter-spacing:-0.745px">Doc</div>
<div class="t" style="left:1214.00px;top:84px;line-height:14px;font-size:12.5px;color:#303942;letter-spacing:-1.320px">WS</div>
<div class="t" style="left:1242.10px;top:84px;line-height:14px;font-size:12.5px;color:#303942;letter-spacing:-0.513px">Wasm</div>
<div class="t" style="left:1285.70px;top:84px;line-height:14px;font-size:12.5px;color:#303942;letter-spacing:-0.081px">Manifest</div>
<div class="t" style="left:1343.00px;top:84px;line-height:14px;font-size:12.5px;color:#303942;letter-spacing:-0.533px">Other</div>
<div class="cb" style="left:1387px;top:85px"></div>
<div class="t" style="left:1405.30px;top:84px;line-height:14px;font-size:12.5px;color:#303942;letter-spacing:-0.250px">Has blocked cookies</div>
<!-- blocked row -->
<div class="cb" style="left:924px;top:109px"></div>
<div class="t" style="left:942.30px;top:108px;line-height:14px;font-size:12.5px;color:#303942;letter-spacing:-0.379px">Blocked Requests</div>
<div class="cb" style="left:1047px;top:109px"></div>
<div class="t" style="left:1065.70px;top:108px;line-height:14px;font-size:12.5px;color:#303942;letter-spacing:-0.263px">3rd-party requests</div>
<!-- overview timeline -->
<div class="abs" style="left:916px;top:128px;width:663px;height:80px;background:#fff"></div>
<div class="abs" style="left:1038px;top:128px;width:1px;height:80px;background:#e1e3e7"></div>
<div class="abs" style="left:1160px;top:128px;width:1px;height:80px;background:#e1e3e7"></div>
<div class="abs" style="left:1282px;top:128px;width:1px;height:80px;background:#e1e3e7"></div>
<div class="abs" style="left:1405px;top:128px;width:1px;height:80px;background:#e1e3e7"></div>
<div class="abs" style="left:1527px;top:128px;width:1px;height:80px;background:#e1e3e7"></div>
<div class="t" style="left:1009.60px;top:131px;line-height:12px;font-size:11px;color:#303942;letter-spacing:-0.754px">20 ms</div>
<div class="t" style="left:1131.70px;top:131px;line-height:12px;font-size:11px;color:#303942;letter-spacing:-0.754px">40 ms</div>
<div class="t" style="left:1253.70px;top:131px;line-height:12px;font-size:11px;color:#303942;letter-spacing:-0.754px">60 ms</div>
<div class="t" style="left:1376.60px;top:131px;line-height:12px;font-size:11px;color:#303942;letter-spacing:-0.754px">80 ms</div>
<div class="t" style="left:1492.60px;top:131px;line-height:12px;font-size:11px;color:#303942;letter-spacing:-0.646px">100 ms</div>
<div class="abs" style="left:916px;top:129px;width:2px;height:15px;background:#6b7078"></div>
<div class="abs" style="left:1577px;top:129px;width:2px;height:15px;background:#6b7078"></div>
<div class="abs" style="left:916px;top:208px;width:663px;height:2px;background:#cdd0d4"></div>
<!-- empty state -->
<div class="t" style="left:1161.50px;top:536px;line-height:16px;font-size:14.5px;color:#5f6368;letter-spacing:-0.446px">Recording network activity…</div>
<div class="t" style="left:1087.20px;top:564px;line-height:16px;font-size:14.5px;color:#5f6368;letter-spacing:-0.256px">Perform a request or hit <b>Ctrl+R</b> to record the reload.</div>
<div class="t" style="left:1212.10px;top:592px;line-height:16px;font-size:14.5px;color:#1a73e8;letter-spacing:-0.366px">Learn more</div>
<div class="abs" style="left:1212px;top:606.5px;width:71px;height:1px;background:#1a73e8"></div>

</body>
</html>
